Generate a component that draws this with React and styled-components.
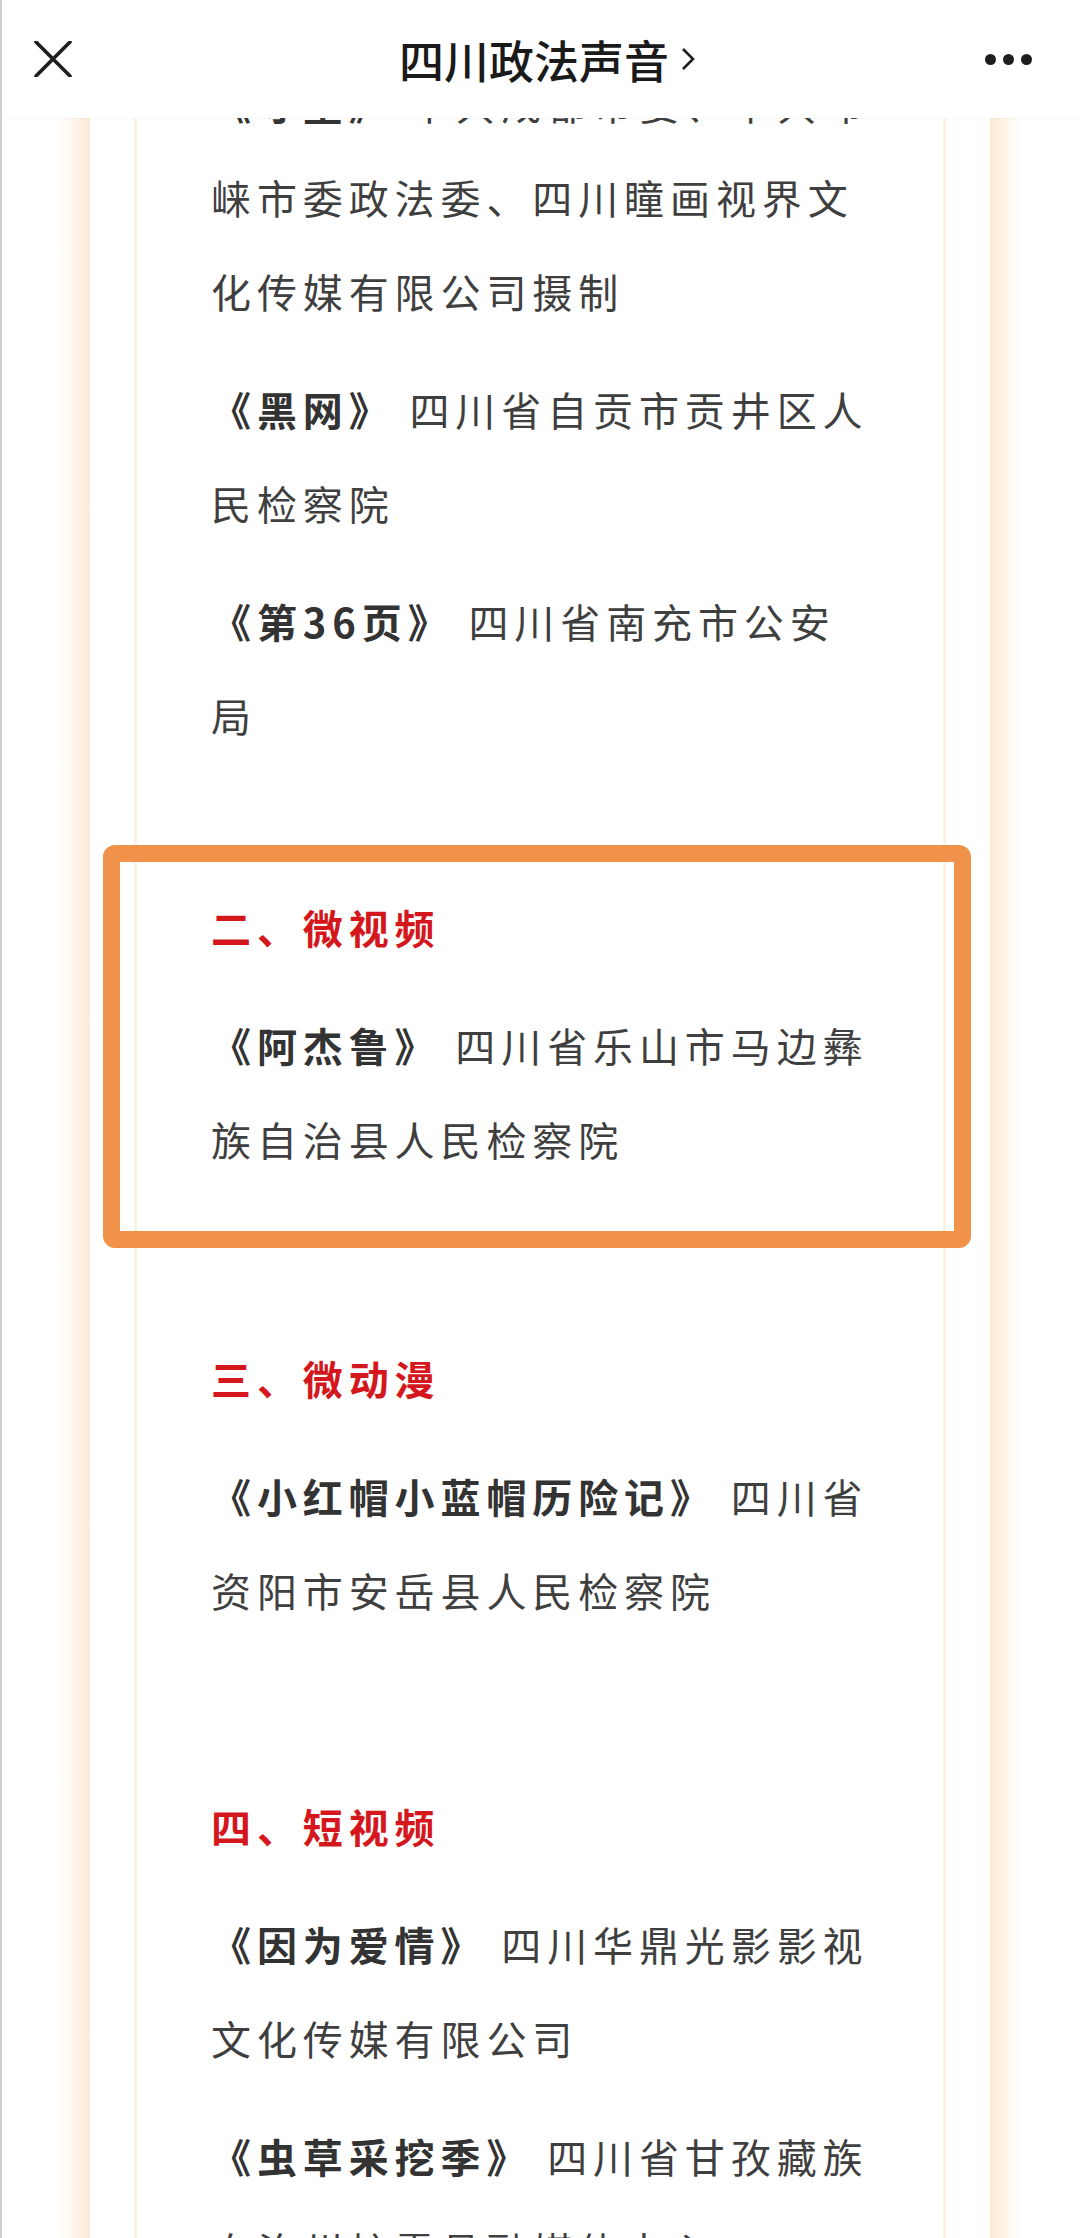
import React from 'react'
import styled, { createGlobalStyle } from 'styled-components'

const GlobalStyle = createGlobalStyle`
  html, body {
    margin: 0;
    padding: 0;
    background: #fff;
  }
  body {
    font-family: "Noto Sans CJK SC", "Noto Sans", sans-serif;
  }
`

function App() {
    return (
        <Screen>
            <GlobalStyle />
            <NavBar>
                <CloseBtn aria-label="关闭">
                    <svg width="38" height="36" viewBox="0 0 38 36">
                        <path d="M2 1 L36 35 M36 1 L2 35" stroke="#1e1e1e" strokeWidth="3.6" strokeLinecap="round" fill="none" />
                    </svg>
                </CloseBtn>
                <Title>
                    四川政法声音
                    <svg width="14" height="24" viewBox="0 0 14 24">
                        <polyline points="2,2 12,12 2,22" stroke="#1e1e1e" strokeWidth="2.6" fill="none" />
                    </svg>
                </Title>
                <MoreBtn aria-label="更多">
                    <Dot /><Dot /><Dot />
                </MoreBtn>
            </NavBar>

            <Viewport>
                <Frame>
                    <Sheet>
                        <Para>
                            <WorkTitle>《守望》</WorkTitle> 中共成都市委、中共邛<br />
                            崃市委政法委、四川瞳画视界文<br />
                            化传媒有限公司摄制
                        </Para>
                        <Para>
                            <WorkTitle>《黑网》</WorkTitle> 四川省自贡市贡井区人<br />
                            民检察院
                        </Para>
                        <Para>
                            <WorkTitle>《第36页》</WorkTitle> 四川省南充市公安<br />
                            局
                        </Para>

                        <Highlight>
                            <Heading>二、微视频</Heading>
                            <Para>
                                <WorkTitle>《阿杰鲁》</WorkTitle> 四川省乐山市马边彝<br />
                                族自治县人民检察院
                            </Para>
                        </Highlight>

                        <Heading>三、微动漫</Heading>
                        <Para>
                            <WorkTitle>《小红帽小蓝帽历险记》</WorkTitle> 四川省<br />
                            资阳市安岳县人民检察院
                        </Para>
                        <Blank />

                        <Heading>四、短视频</Heading>
                        <Para>
                            <WorkTitle>《因为爱情》</WorkTitle> 四川华鼎光影影视<br />
                            文化传媒有限公司
                        </Para>
                        <Para>
                            <WorkTitle>《虫草采挖季》</WorkTitle> 四川省甘孜藏族<br />
                            自治州炉霍县融媒体中心
                        </Para>
                    </Sheet>
                </Frame>
            </Viewport>
        </Screen>
    )
}

export default App


const Screen = styled.div`
    width: 1080px;
    height: 2238px;
    overflow: hidden;
    box-sizing: border-box;
    border-left: 2px solid #cfcfcf;
    background: #fff;
    display: flex;
    flex-direction: column;
`

const NavBar = styled.header`
    flex: 0 0 118px;
    box-sizing: border-box;
    padding: 0 48px 0 32px;
    display: grid;
    grid-template-columns: 1fr auto 1fr;
    align-items: center;
    background: #fff;
    box-shadow: 0 1px 0 rgba(0, 0, 0, 0.03);
    position: relative;
    z-index: 1;
`

const CloseBtn = styled.div`
    justify-self: start;
    display: flex;
    align-items: center;
`

const Title = styled.div`
    display: flex;
    align-items: center;
    gap: 12px;
    padding-left: 28px;
    font-size: 45px;
    font-weight: 500;
    color: #1a1a1a;
    line-height: 1;
`

const MoreBtn = styled.div`
    justify-self: end;
    display: flex;
    gap: 7px;
    align-items: center;
`

const Dot = styled.span`
    width: 11px;
    height: 11px;
    border-radius: 50%;
    background: #1e1e1e;
`

/* the article is scrolled: its top is hidden under the nav bar */
const Viewport = styled.main`
    flex: 1;
    overflow: hidden;
`

const Frame = styled.div`
    height: calc(100% + 62px);
    margin: -62px 58px 0 56px;
    box-sizing: border-box;
    padding: 0 32px;
    background: linear-gradient(
        to right,
        #fff 0,
        #fcecd6 32px,
        #fff 32px,
        #fff calc(100% - 32px),
        #fcecd6 calc(100% - 32px),
        #fff 100%
    );
`

const Sheet = styled.article`
    height: 100%;
    box-sizing: border-box;
    margin: 0 44px;
    padding: 0 30px 0 74px;
    border-left: 3px solid #faf2e3;
    border-right: 3px solid #faf2e3;
    background: #fff;
    display: flow-root;
`

const Para = styled.p`
    margin: 0 0 24px;
    font-size: 40px;
    line-height: 94px;
    letter-spacing: 5.9px;
    color: #3f3f3f;

    &:last-child {
        margin-bottom: 0;
    }
`

const WorkTitle = styled.strong`
    font-weight: 700;
    color: #333;
`

const Heading = styled(Para)`
    font-weight: 700;
    color: #d4171d;
`

const Blank = styled.p`
    margin: 0 0 24px;
    height: 94px;
`

const Highlight = styled.section`
    margin: 83px -58px 83px -108px;
    padding: 18px 0 45px 91px;
    border: 17px solid #f0924a;
    border-radius: 12px;
`
